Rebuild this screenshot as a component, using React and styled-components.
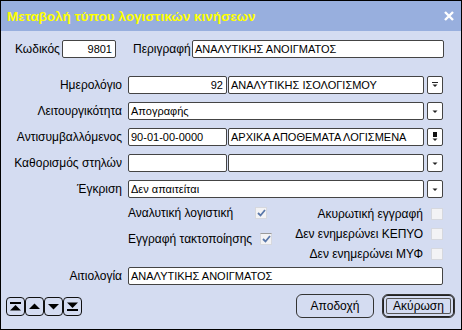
import React from 'react';
import styled, { createGlobalStyle } from 'styled-components';

const Global = createGlobalStyle`
  html, body { margin: 0; padding: 0; background: #d4dcf1; }
  * { box-sizing: border-box; }
`;

const Window = styled.div`
  width: 462px;
  height: 330px;
  border: 1px solid #000;
  background: #d4dcf1;
  font-family: "Liberation Sans", Arial, sans-serif;
  font-size: 12px;
  color: #000;
  display: flex;
  flex-direction: column;
`;

const TitleBar = styled.div`
  height: 30px;
  background: #98afde;
  display: flex;
  align-items: center;
  justify-content: space-between;
  padding: 0 6px 0 6px;
  color: #ffff00;
  font-weight: bold;
  font-size: 13.5px;
`;

const Close = styled.svg`
  width: 10px;
  height: 10px;
  margin-right: 1px;
`;

const Body = styled.div`
  flex: 1;
  display: flex;
  flex-direction: column;
`;

const TopRow = styled.div`
  display: flex;
  align-items: center;
  height: 18px;
  margin-top: 9px;
  padding-left: 14px;
  padding-right: 17px;
`;

const Label = styled.span`
  width: ${p => p.$w}px;
  flex: none;
  white-space: nowrap;
`;

const Input = styled.div`
  height: 18px;
  background: #fff;
  border: 1px solid #444;
  border-radius: 2px;
  padding: 0 ${p => (p.$right ? 3 : 2)}px;
  display: flex;
  align-items: center;
  justify-content: ${p => (p.$right ? 'flex-end' : 'flex-start')};
  white-space: nowrap;
  overflow: hidden;
  font-size: 11px;
  width: ${p => (p.$w ? `${p.$w}px` : 'auto')};
  flex: ${p => (p.$w ? 'none' : '1')};
`;

const Form = styled.div`
  display: grid;
  grid-template-columns: 121px 1fr;
  column-gap: 6px;
  row-gap: 8px;
  margin-top: 18px;
  padding-right: 18px;
`;

const RowLabel = styled.span`
  text-align: right;
  align-self: center;
  white-space: nowrap;
`;

const Field = styled.div`
  display: flex;
  align-items: center;
  gap: 1px;
  height: 18px;
`;

const DropButton = styled.div`
  width: 16px;
  height: 18px;
  margin-left: 2px;
  flex: none;
  background: #fff;
  border: 1px solid #444;
  border-radius: 2px;
  display: flex;
  align-items: center;
  justify-content: center;
`;

const Checks = styled.div`
  display: flex;
  margin-top: 9px;
  padding-left: 127px;
  padding-right: 18px;
`;

const CheckCol = styled.div`
  display: flex;
  flex-direction: column;
  gap: ${p => p.$gap}px;
  align-items: ${p => (p.$end ? 'flex-end' : 'stretch')};
  width: ${p => (p.$w ? `${p.$w}px` : 'auto')};
  flex: ${p => (p.$w ? 'none' : '1')};
  padding-top: ${p => p.$top || 0}px;
`;

const CheckRow = styled.div`
  display: flex;
  align-items: center;
  justify-content: ${p => (p.$end ? 'flex-end' : 'space-between')};
  gap: 8px;
  height: 12px;
  white-space: nowrap;
`;

const Box = styled.div`
  width: 12px;
  height: 12px;
  flex: none;
  background: #f3f3f5;
  border: 1px solid #d6d8de;
  border-top-color: ${p => (p.$dark ? '#9a9a9a' : '#d6d8de')};
  display: flex;
  align-items: center;
  justify-content: center;
`;

const ReasonRow = styled.div`
  display: grid;
  grid-template-columns: 121px 1fr;
  column-gap: 6px;
  margin-top: 7px;
  padding-right: 18px;
`;

const Footer = styled.div`
  display: flex;
  align-items: center;
  justify-content: space-between;
  margin-top: 9px;
  padding-left: 5px;
  padding-right: 6px;
`;

const NavGroup = styled.div`
  display: flex;
`;

const NavButton = styled.div`
  width: 19px;
  height: 19px;
  border: 1px solid #111;
  border-radius: 4px;
  display: flex;
  align-items: center;
  justify-content: center;
`;

const Actions = styled.div`
  display: flex;
  gap: 8px;
`;

const Button = styled.div`
  width: ${p => p.$w}px;
  height: 24px;
  border: 1px solid #333;
  border-radius: 6px;
  display: flex;
  align-items: center;
  justify-content: center;
  box-shadow: ${p => (p.$focus ? 'inset 0 0 0 1px #222, inset 0 0 0 3px #d4dcf1, inset 0 0 0 4px #555' : 'none')};
`;

const Arrow = ({ kind }) => (
  <svg width="8" height="10" viewBox="0 0 8 10">
    {kind === 'bar' && <rect x="1" y="2" width="6" height="1" fill="#222" />}
    {kind === 'block' && <rect x="2" y="0" width="4" height="5" fill="#111" />}
    <path d={kind === 'block' ? 'M1.5 6.5h5L4 9z' : 'M1.5 4.5h5L4 7z'} fill="#222" />
  </svg>
);

const NavIcon = ({ dir, bar }) => (
  <svg width="11" height="9" viewBox="0 0 11 9">
    {dir === 'up' ? (
      <>
        {bar && <rect x="0" y="0" width="11" height="2" fill="#000" />}
        <path d={bar ? 'M0 8.5h11L5.5 3z' : 'M0 7h11L5.5 1.5z'} fill="#000" />
      </>
    ) : (
      <>
        <path d={bar ? 'M0 0.5h11L5.5 6z' : 'M0 2h11L5.5 7.5z'} fill="#000" />
        {bar && <rect x="0" y="7" width="11" height="2" fill="#000" />}
      </>
    )}
  </svg>
);

const Check = () => (
  <svg width="9" height="8" viewBox="0 0 9 8">
    <path d="M1 4l2.5 2.5L8 1" stroke="#5a78aa" strokeWidth="1.8" fill="none" />
  </svg>
);

const rows = [
  { label: 'Ημερολόγιο', a: '92', b: 'ΑΝΑΛΥΤΙΚΗΣ ΙΣΟΛΟΓΙΣΜΟΥ', arrow: 'bar' },
  { label: 'Λειτουργικότητα', full: 'Απογραφής', arrow: 'plain' },
  { label: 'Αντισυμβαλλόμενος', a: '90-01-00-0000', aLeft: true, b: 'ΑΡΧΙΚΑ ΑΠΟΘΕΜΑΤΑ ΛΟΓΙΣΜΕΝΑ', arrow: 'block' },
  { label: 'Καθορισμός στηλών', a: '', b: '', arrow: 'plain' },
  { label: 'Έγκριση', full: 'Δεν απαιτείται', arrow: 'plain' },
];

export default function App() {
  return (
    <>
      <Global />
      <Window>
        <TitleBar>
          <span>Μεταβολή τύπου λογιστικών κινήσεων</span>
          <Close viewBox="0 0 10 10">
            <path d="M1 1l8 8M9 1l-8 8" stroke="#fff" strokeWidth="2.4" />
          </Close>
        </TitleBar>
        <Body>
          <TopRow>
            <Label $w={47}>Κωδικός</Label>
            <Input $w={54} $right>9801</Input>
            <Label $w={59} style={{ marginLeft: 17 }}>Περιγραφή</Label>
            <Input>ΑΝΑΛΥΤΙΚΗΣ ΑΝΟΙΓΜΑΤΟΣ</Input>
          </TopRow>

          <Form>
            {rows.map(r => (
              <React.Fragment key={r.label}>
                <RowLabel>{r.label}</RowLabel>
                <Field>
                  {r.full !== undefined ? (
                    <Input>{r.full}</Input>
                  ) : (
                    <>
                      <Input $w={99} $right={!r.aLeft}>{r.a}</Input>
                      <Input>{r.b}</Input>
                    </>
                  )}
                  <DropButton>
                    <Arrow kind={r.arrow} />
                  </DropButton>
                </Field>
              </React.Fragment>
            ))}
          </Form>

          <Checks>
            <CheckCol $w={139} $gap={14}>
              <CheckRow>
                <span>Αναλυτική λογιστική</span>
                <Box><Check /></Box>
              </CheckRow>
              <CheckRow>
                <span>Εγγραφή τακτοποίησης</span>
                <Box $dark><Check /></Box>
              </CheckRow>
            </CheckCol>
            <CheckCol $end $gap={8} $top={1}>
              <CheckRow $end>
                <span>Ακυρωτική εγγραφή</span>
                <Box />
              </CheckRow>
              <CheckRow $end>
                <span>Δεν ενημερώνει ΚΕΠΥΟ</span>
                <Box />
              </CheckRow>
              <CheckRow $end>
                <span>Δεν ενημερώνει ΜΥΦ</span>
                <Box />
              </CheckRow>
            </CheckCol>
          </Checks>

          <ReasonRow>
            <RowLabel>Αιτιολογία</RowLabel>
            <Input>ΑΝΑΛΥΤΙΚΗΣ ΑΝΟΙΓΜΑΤΟΣ</Input>
          </ReasonRow>

          <Footer>
            <NavGroup>
              <NavButton><NavIcon dir="up" bar /></NavButton>
              <NavButton><NavIcon dir="up" /></NavButton>
              <NavButton><NavIcon dir="down" /></NavButton>
              <NavButton><NavIcon dir="down" bar /></NavButton>
            </NavGroup>
            <Actions>
              <Button $w={78}>Αποδοχή</Button>
              <Button $w={73} $focus>Ακύρωση</Button>
            </Actions>
          </Footer>
        </Body>
      </Window>
    </>
  );
}
